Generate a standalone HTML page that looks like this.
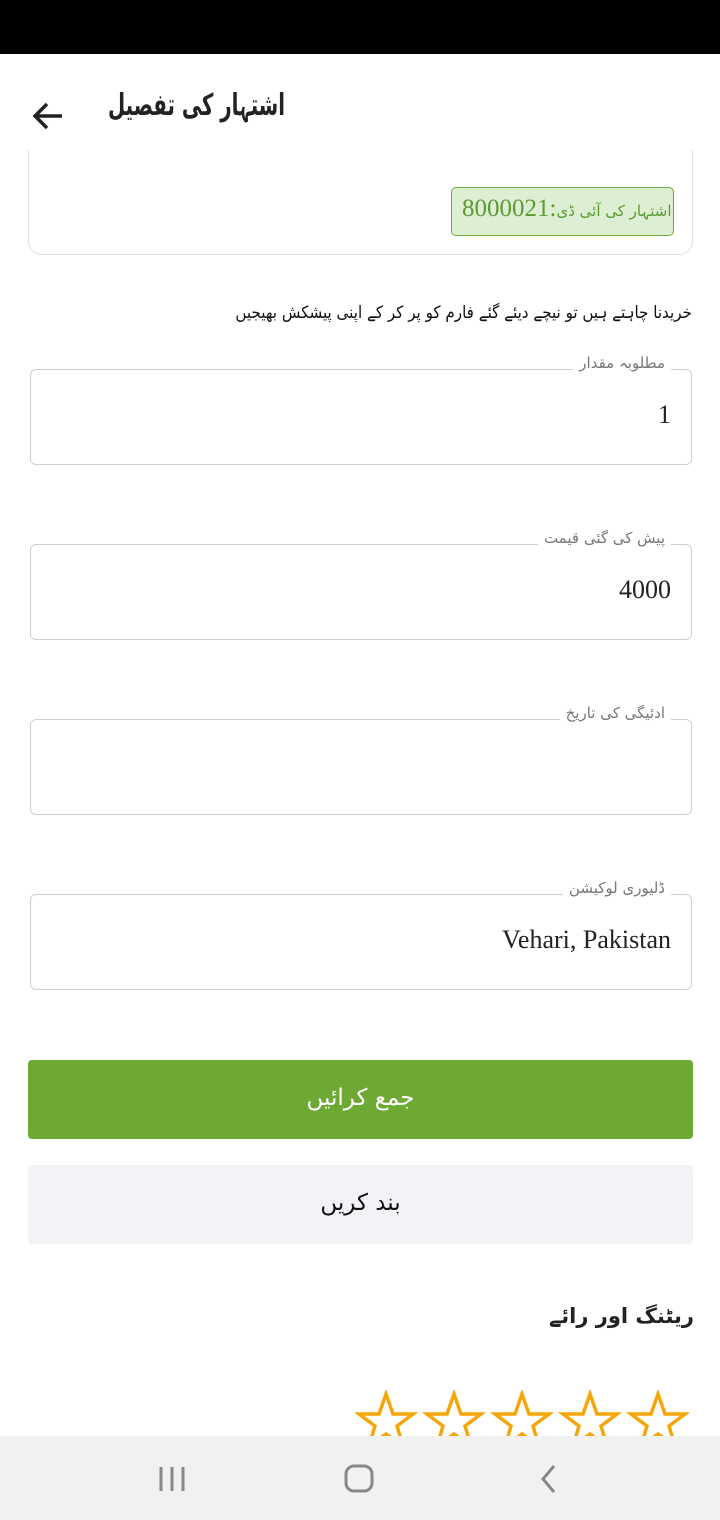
<!DOCTYPE html>
<html><head><meta charset="utf-8"><style>
*{margin:0;padding:0;box-sizing:border-box}
body{width:720px;height:1520px;background:#fff;position:relative;overflow:hidden;font-family:"Liberation Serif","DejaVu Sans",serif;color:#222}
.ur{font-family:"DejaVu Sans",sans-serif;direction:rtl}
.abs{position:absolute}
.field{position:absolute;left:30px;width:662px;height:96px;border:1px solid #cfcfcf;border-radius:6px}
.lab{position:absolute;right:20px;top:-16px;background:#fff;padding:0 6px;font-size:15px;color:#777;font-family:"DejaVu Sans",sans-serif}
.val{position:absolute;right:20px;top:30px;font-size:26px;color:#222}
</style></head><body>
<div class="abs" style="left:0;top:0;width:720px;height:54px;background:#000"></div>
<svg class="abs" style="left:30px;top:98px" width="36" height="36" viewBox="0 0 36 36"><path d="M32 18H6M17 6L5 18l12 12" stroke="#222" stroke-width="3.5" fill="none"/></svg>
<div class="abs ur" style="left:108px;top:88px;font-size:30px;font-weight:bold;color:#222;transform:scaleX(0.66);transform-origin:left top;white-space:nowrap">اشتہار کی تفصیل</div>
<div class="abs" style="left:28px;top:150px;width:665px;height:105px;border:1px solid #e0e0e0;border-top:none;border-radius:0 0 14px 14px"></div>
<div class="abs" style="left:451px;top:187px;width:223px;height:49px;background:#dcefd2;border:1px solid #6fa93d;border-radius:5px"></div>
<div class="abs" style="left:462px;top:195px;font-size:25px;color:#5e9a33;white-space:nowrap">8000021:<span class="ur" style="font-size:15px">اشتہار کی آئی ڈی</span></div>
<div class="abs ur" style="right:28px;top:302px;font-size:17px;color:#111;white-space:nowrap;transform:scaleX(0.89);transform-origin:right top">خریدنا چاہتے ہیں تو نیچے دیئے گئے فارم کو پر کر کے اپنی پیشکش بھیجیں</div>
<div class="field" style="top:369px"><span class="lab">مطلوبہ مقدار</span><span class="val">1</span></div>
<div class="field" style="top:544px"><span class="lab">پیش کی گئی قیمت</span><span class="val">4000</span></div>
<div class="field" style="top:719px"><span class="lab">ادئیگی کی تاریخ</span></div>
<div class="field" style="top:894px"><span class="lab">ڈلیوری لوکیشن</span><span class="val">Vehari, Pakistan</span></div>
<div class="abs ur" style="left:28px;top:1060px;width:665px;height:79px;background:#6ea933;border-radius:4px;color:#fff;font-size:23px;text-align:center;line-height:76px">جمع کرائیں</div>
<div class="abs ur" style="left:28px;top:1165px;width:665px;height:79px;background:#f2f3f7;border-radius:4px;color:#111;font-size:23px;text-align:center;line-height:76px">بند کریں</div>
<div class="abs ur" style="right:26px;top:1304px;font-size:21px;font-weight:bold;color:#222">ریٹنگ اور رائے</div>
<svg class="abs" style="left:355px;top:1390px" width="340" height="60" viewBox="0 0 340 60">
<defs><path id="s" d="M0-28L7-8H27L11 4L17 24L0 12L-17 24L-11 4L-27-8H-7Z" fill="none" stroke="#f5a60b" stroke-width="3.5"/></defs>
<use href="#s" x="31" y="32"/><use href="#s" x="99" y="32"/><use href="#s" x="167" y="32"/><use href="#s" x="235" y="32"/><use href="#s" x="303" y="32"/>
</svg>
<div class="abs" style="left:0;top:1436px;width:720px;height:84px;background:#f1f1f1"></div>
<svg class="abs" style="left:0;top:1436px" width="720" height="84">
<path d="M161 31v24M172 31v24M183 31v24" stroke="#888" stroke-width="3"/>
<rect x="346" y="30" width="26" height="25" rx="8" fill="none" stroke="#888" stroke-width="3"/>
<path d="M554 30l-11 13 11 13" fill="none" stroke="#888" stroke-width="3"/>
</svg>
</body></html>
